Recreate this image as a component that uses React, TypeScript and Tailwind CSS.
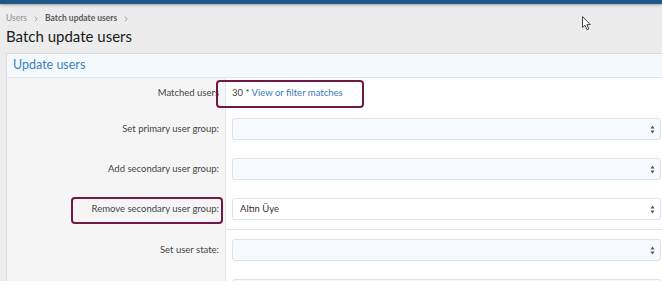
import type { ReactNode } from 'react';

const font = { fontFamily: 'Lato, "Liberation Sans", Arial, sans-serif' };

function Chevron() {
	return (
		<svg width="4" height="6" viewBox="0 0 4 6">
			<path d="M0.8 0.6 L3.2 3 L0.8 5.4" fill="none" stroke="#9a9a9a" strokeWidth="0.9" />
		</svg>
	);
}

function SelectBox({ value, white }: { value?: string; white?: boolean }) {
	return (
		<div
			className={`flex h-[22px] w-[429px] items-center justify-between rounded-[3px] border border-[#dbe2ea] px-[7px] text-[9.5px] text-[#333] ${
				white ? 'bg-white' : 'bg-[#f6f9fd]'
			}`}
		>
			<span>{value}</span>
			<svg width="5" height="9" viewBox="0 0 5 9" className="mr-[-2px]">
				<path d="M2.5 0.5 L4.5 3.5 L0.5 3.5 Z" fill="#555" />
				<path d="M2.5 8.5 L4.5 5.5 L0.5 5.5 Z" fill="#555" />
			</svg>
		</div>
	);
}

function FormRow({ label, children, tall = true }: { label: string; children: ReactNode; tall?: boolean }) {
	return (
		<div className={`flex ${tall ? 'h-[40px]' : 'h-[31px]'}`}>
			<div className="flex w-[218px] shrink-0 items-center justify-end bg-[#f5f5f5] pr-[6px] text-[9.5px] text-[#454545]">
				{label}
			</div>
			<div className="flex flex-1 items-center border-l border-[#e6e6e6] bg-white pl-[6px]">{children}</div>
		</div>
	);
}

export default function App() {
	return (
		<div className="h-[300px] w-[662px] overflow-hidden bg-white" style={font}>
			<div className="relative h-[281px] overflow-hidden bg-[#ececec]">
				<div className="h-[4px] bg-[#1d5a88] shadow-[0_1px_3px_rgba(0,0,0,0.35)]" />

				<div className="flex items-center gap-[7px] pl-[6px] pt-[8px] text-[8.5px] leading-[13px] text-[#8f8f8f]">
					<span>Users</span>
					<Chevron />
					<span className="font-bold text-[#5a5a5a]">Batch update users</span>
					<Chevron />
				</div>

				<h1 className="pl-[6px] pt-[1px] text-[15px] leading-[20px] text-[#1a1a1a]">Batch update users</h1>

				<div className="ml-[6px] mt-[7px] w-[700px] border border-[#dcdcdc] bg-white">
					<div className="flex h-[24px] items-center border-b border-[#dfe6ee] bg-[#f4f9fe] pl-[6px] text-[12.5px] text-[#3e82c0]">
						Update users
					</div>

					<FormRow label="Matched users" tall={false}>
						<span className="text-[9.5px] text-[#444]">
							30 * <span className="text-[#3b7bbb]">View or filter matches</span>
						</span>
					</FormRow>
					<FormRow label="Set primary user group:">
						<SelectBox />
					</FormRow>
					<FormRow label="Add secondary user group:">
						<SelectBox />
					</FormRow>
					<FormRow label="Remove secondary user group:">
						<SelectBox value="Altın Üye" white />
					</FormRow>
					<div className="flex">
						<div className="w-[218px] shrink-0 bg-[#f5f5f5]" />
						<div className="h-[1px] flex-1 bg-[#e4e4e4]" />
					</div>
					<FormRow label="Set user state:">
						<SelectBox />
					</FormRow>
					<FormRow label="">
						<SelectBox />
					</FormRow>
				</div>

				<div className="absolute left-[216px] top-[80px] h-[28px] w-[148px] rounded-[4px] border-2 border-[#721846]" />
				<div className="absolute left-[71px] top-[197px] h-[27px] w-[152px] rounded-[4px] border-2 border-[#721846]" />

				<svg className="absolute left-[582px] top-[16px]" width="10" height="15" viewBox="0 0 10 15">
					<path d="M0.5 0.5 L0.5 11.5 L3 9.2 L5 13.8 L6.8 13 L4.9 8.6 L8.3 8.6 Z" fill="#fff" stroke="#333" strokeWidth="0.9" strokeLinejoin="round" />
				</svg>
			</div>
		</div>
	);
}
